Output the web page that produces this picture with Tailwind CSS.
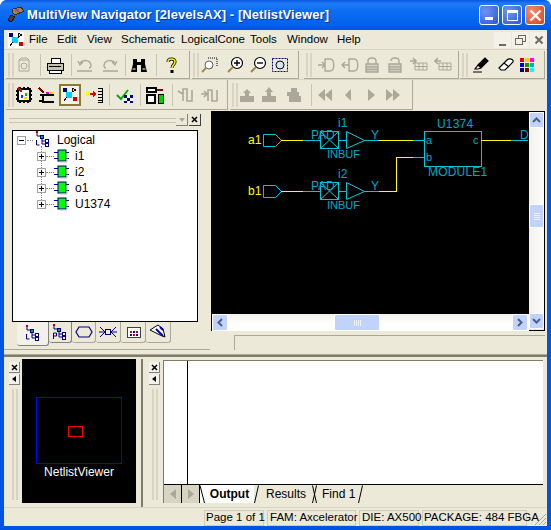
<!DOCTYPE html>
<html lang="en">
<head>
  <meta charset="UTF-8">
  <title>MultiView Navigator</title>
  <script src="https://cdn.jsdelivr.net/npm/@tailwindcss/browser@4"></script>
</head>
<body class="bg-white overflow-hidden font-['Liberation_Sans',sans-serif] text-[11.5px] text-black">

<!-- shared icons -->
<svg class="hidden">
  <symbol id="chip" viewBox="0 0 16 14">
    <rect x="4" y="1" width="8" height="11" fill="#00ff00" stroke="#000080"/>
    <path d="M0 3.5h4M0 9.5h4M12 3.5h3M12 9.5h3" stroke="#000080"/>
    <path d="M13 4v9H6" stroke="#c0c0c0" fill="none"/>
  </symbol>
  <symbol id="plus" viewBox="0 0 9 9">
    <rect x="0.5" y="0.5" width="8" height="8" fill="#fff" stroke="#a0a0a0"/>
    <path d="M2 4.5h5M4.5 2v5" stroke="#000"/>
  </symbol>
  <symbol id="tree" viewBox="0 0 16 16">
    <rect x="1" y="0" width="2" height="2" fill="#c00000"/>
    <path d="M2 2v3h4M7 7v3h3M7 10v3h3" stroke="#000080" fill="none"/>
    <rect x="5.5" y="4.5" width="3" height="3" fill="#00a060" stroke="#000080"/>
    <rect x="10.5" y="8.5" width="3" height="3" fill="#fff" stroke="#000080"/>
    <rect x="10.5" y="12.5" width="3" height="3" fill="#fff" stroke="#000080"/>
    <path d="M1.5 9v5h3" stroke="#000080" fill="none"/>
  </symbol>
  <symbol id="treep" viewBox="0 0 16 16">
    <rect x="1" y="0" width="2" height="2" fill="#c00000"/>
    <path d="M2 2v3h4M7 7v3h3M7 10v3h3" stroke="#000080" fill="none"/>
    <rect x="5.5" y="4.5" width="3" height="3" fill="#00a060" stroke="#000080"/>
    <rect x="10.5" y="8.5" width="3" height="3" fill="#fff" stroke="#000080"/>
    <rect x="10.5" y="12.5" width="3" height="3" fill="#fff" stroke="#000080"/>
    <path d="M1.5 15V9h3v3h-3" stroke="#000080" fill="none"/>
  </symbol>
</svg>

<div class="w-[551px] h-[530px] flex flex-col rounded-t-[7px] overflow-hidden bg-[#0054e3]">

  <!-- title bar -->
  <div class="h-[30px] shrink-0 flex items-center pl-[7px] pr-[6px] bg-[linear-gradient(180deg,#0a55e0_0%,#1f7bf5_12%,#0f6df5_35%,#0468f0_60%,#0260ea_85%,#0054e3_100%)]">
    <svg class="w-[18px] h-[18px] shrink-0" viewBox="0 0 18 18" shape-rendering="crispEdges">
      <path d="M6 3l8-2 3 4-9 4-3-3z" fill="#a08850" stroke="#3a2a20"/>
      <path d="M4 9l4 2-4 5-3-2z" fill="#504030" stroke="#201810"/>
      <rect x="8" y="3" width="4" height="3" fill="#9a50a0"/>
    </svg>
    <span class="ml-[2px] w-[312px] shrink-0 whitespace-nowrap text-white font-bold text-[13px] tracking-[0.07px] [text-shadow:1px_1px_0_#0a2f9a]">MultiView Navigator [2levelsAX] - [NetlistViewer]</span>
    <div class="ml-auto flex gap-[3px]">
      <div class="w-[20px] h-[20px] rounded-[3px] border border-white bg-[radial-gradient(circle_at_30%_30%,#6f95ee,#2a55d8)] flex items-end pl-[5px] pb-[4px]"><div class="w-[8px] h-[3px] bg-white"></div></div>
      <div class="w-[20px] h-[20px] rounded-[3px] border border-white bg-[radial-gradient(circle_at_30%_30%,#6f95ee,#2a55d8)] flex items-center justify-center"><div class="w-[11px] h-[11px] border border-white border-t-[3px]"></div></div>
      <div class="w-[20px] h-[20px] rounded-[3px] border border-white bg-[radial-gradient(circle_at_30%_30%,#ee9070,#d0441c)] flex items-center justify-center">
        <svg class="w-[13px] h-[13px]" viewBox="0 0 13 13"><path d="M1.5 1.5l10 10M11.5 1.5l-10 10" stroke="#fff" stroke-width="2.4"/></svg>
      </div>
    </div>
  </div>

  <div class="flex-1 flex flex-col mx-[4px] bg-[#ece9d8] min-h-0">

    <!-- menu bar -->
    <div class="h-[20px] shrink-0 flex items-center relative border-b border-[#d8d4c4]">
      <svg class="w-[16px] h-[16px] ml-[4px] shrink-0" viewBox="0 0 16 16" shape-rendering="crispEdges">
        <rect width="16" height="16" fill="#fff"/>
        <rect x="1" y="1" width="4" height="4" fill="#000080"/>
        <path d="M10 1l4 2-4 2z" fill="#ffff00" stroke="#000"/>
        <rect x="4" y="5" width="6" height="6" fill="#00d0ff"/>
        <path d="M2 14l3-4M10 6l2-2" stroke="#000"/>
        <rect x="11" y="10" width="4" height="4" fill="#d00000"/>
      </svg>
      <div class="ml-[5px] flex">
        <span class="w-[28px]">File</span><span class="w-[30px]">Edit</span><span class="w-[34px]">View</span><span class="w-[60px]">Schematic</span><span class="w-[69px]">LogicalCone</span><span class="w-[37px]">Tools</span><span class="w-[50px]">Window</span><span>Help</span>
      </div>
      <div class="ml-auto mr-[0px] flex gap-[1px]">
        <div class="w-[17px] h-[16px] bg-[#f4f2e8] flex items-end justify-center pb-[2px]"><div class="w-[7px] h-[2px] bg-[#6b6b60]"></div></div>
        <div class="w-[17px] h-[16px] bg-[#f4f2e8] flex items-center justify-center">
          <svg class="w-[11px] h-[10px]" viewBox="0 0 11 10" shape-rendering="crispEdges"><path d="M3.5 2.5v-2h7v6h-3M0.5 3.5h7v6h-7z" fill="none" stroke="#6b6b60"/></svg>
        </div>
        <div class="w-[17px] h-[16px] bg-[#f4f2e8] flex items-center justify-center">
          <svg class="w-[10px] h-[10px]" viewBox="0 0 10 10"><path d="M1.5 1.5l7 7M8.5 1.5l-7 7" stroke="#6b6b60" stroke-width="2"/></svg>
        </div>
      </div>
    </div>

    <!-- toolbar 1 -->
    <div class="h-[30px] shrink-0 flex pl-[2px] border-b border-[#d8d4c4] pt-[1px]">
      <div class="w-[184px] flex items-center border-r border-b border-[#aca899]">
        <div class="ml-[2px] w-[6px] h-[24px] border-x-2 border-[#d8d4c4]"></div>
        <svg class="ml-[1px] w-[18px] h-[18px]" viewBox="0 0 18 18" fill="none" stroke="#aca899"><path d="M4 4h10v11H4zM4 4l2-2h6l2 2"/><circle cx="9" cy="10" r="3"/></svg>
        <div class="ml-[7px] w-px h-[22px] bg-[#c8c4b4]"></div>
        <svg class="ml-[5px] w-[18px] h-[18px]" viewBox="0 0 18 18" shape-rendering="crispEdges"><path d="M5 2h9v5H5z" fill="#fff" stroke="#000"/><path d="M1 7h16v7H1z" fill="#c8c4b4" stroke="#000"/><path d="M3 14h12v3H3z" fill="#fff" stroke="#000"/><path d="M3 10h12" stroke="#000"/></svg>
        <div class="ml-[7px] w-px h-[22px] bg-[#c8c4b4]"></div>
        <svg class="ml-[4px] w-[18px] h-[18px]" viewBox="0 0 18 18" fill="none" stroke="#aca899" stroke-width="1.3"><path d="M2 5l2 4 3-3M4 7c3-4 10-3 11 2 0 2-1 3-2 3M1 15h15"/></svg>
        <svg class="ml-[7px] w-[18px] h-[18px]" viewBox="0 0 18 18" fill="none" stroke="#aca899" stroke-width="1.3"><path d="M16 5l-2 4-3-3M14 7C11 3 4 4 3 9c0 2 1 3 2 3M2 15h15"/></svg>
        <div class="ml-[6px] w-px h-[22px] bg-[#c8c4b4]"></div>
        <svg class="ml-[4px] w-[18px] h-[18px]" viewBox="0 0 18 18"><path d="M3 3h4v3h4V3h4v5l2 8h-6V9H7v7H1l2-8z" fill="#000"/><path d="M2.5 13h3M12.5 13h3" stroke="#fff"/></svg>
        <div class="ml-[8px] w-px h-[22px] bg-[#c8c4b4]"></div>
        <svg class="ml-[5px] w-[18px] h-[18px]" viewBox="0 0 18 18"><path d="M6 6c0-4 7-4 7 0 0 2.500-3 2.500-3 6" fill="none" stroke="#000" stroke-width="3"/><path d="M6 6c0-4 7-4 7 0 0 2.500-3 2.500-3 6" fill="none" stroke="#ffff00" stroke-width="1.500"/><rect x="8.500" y="14" width="3" height="3" fill="#000"/></svg>
      </div>
      <div class="ml-[2px] w-[107px] flex items-center border-r border-b border-[#aca899]">
        <div class="ml-[1px] w-[6px] h-[24px] border-x-2 border-[#d8d4c4]"></div>
        <svg class="ml-[2px] w-[18px] h-[18px]" viewBox="0 0 18 18" fill="none"><path d="M7 2h9v9" stroke="#000" stroke-dasharray="1 1"/><circle cx="8" cy="9" r="4" fill="#fff" stroke="#606060"/><path d="M5 12l-4 4" stroke="#a08850" stroke-width="2"/></svg>
        <svg class="ml-[7px] w-[18px] h-[18px]" viewBox="0 0 18 18" fill="none"><circle cx="11" cy="7" r="5.500" fill="#fff" stroke="#000" stroke-width="1.200"/><path d="M8 7h6M11 4v6" stroke="#000" stroke-width="1.400"/><path d="M7 11l-5 5" stroke="#a08850" stroke-width="2"/></svg>
        <svg class="ml-[5px] w-[18px] h-[18px]" viewBox="0 0 18 18" fill="none"><circle cx="11" cy="7" r="5.500" fill="#fff" stroke="#000" stroke-width="1.200"/><path d="M8 7h6" stroke="#000" stroke-width="1.400"/><path d="M7 11l-5 5" stroke="#a08850" stroke-width="2"/></svg>
        <svg class="ml-[4px] w-[18px] h-[18px]" viewBox="0 0 18 18" fill="none"><rect x="1.500" y="2.500" width="15" height="13" stroke="#000080" stroke-dasharray="2 1"/><circle cx="9" cy="9" r="4" fill="#d0e8ff" stroke="#000"/></svg>
      </div>
      <div class="ml-[5px] w-[155px] flex items-center border-r border-b border-[#aca899]">
        <div class="ml-[2px] w-[6px] h-[24px] border-x-2 border-[#d8d4c4]"></div>
        <svg class="ml-[5px] w-[18px] h-[18px]" viewBox="0 0 18 18" fill="none" stroke="#aca899" stroke-width="1.400"><path d="M1 9h7M5 6l3 3-3 3M8 3h5c5 0 5 12 0 12H8z"/></svg>
        <svg class="ml-[6px] w-[18px] h-[18px]" viewBox="0 0 18 18" fill="none" stroke="#aca899" stroke-width="1.400"><path d="M8 9H1M4 6L1 9l3 3M8 3h5c5 0 5 12 0 12H8z"/></svg>
        <svg class="ml-[4px] w-[18px] h-[18px]" viewBox="0 0 18 18" fill="none" stroke="#aca899" stroke-width="1.400"><path d="M5 8V5c0-4 8-4 8 0v3"/><path d="M3 8h12v8H3z" fill="#d8d4c4"/><path d="M3 11h12M3 13.500h12"/></svg>
        <svg class="ml-[5px] w-[18px] h-[18px]" viewBox="0 0 18 18" fill="none" stroke="#aca899" stroke-width="1.400"><path d="M5 5c0-4 8-4 8 0v3"/><path d="M3 8h12v8H3z" fill="#d8d4c4"/><path d="M3 11h12M3 13.500h12"/></svg>
        <svg class="ml-[6px] w-[18px] h-[18px]" viewBox="0 0 18 18" fill="none" stroke="#aca899"><path d="M0 5h6M3 2l3 3-3 3" stroke-width="1.600"/><path d="M5 7h12v7H5zM5 10.500h12M9 7v7M13 7v7"/></svg>
        <svg class="ml-[6px] w-[18px] h-[18px]" viewBox="0 0 18 18" fill="none" stroke="#aca899"><path d="M7 5H1M4 2L1 5l3 3" stroke-width="1.600"/><path d="M5 7h12v7H5zM5 10.500h12M9 7v7M13 7v7"/></svg>
      </div>
      <div class="ml-[1px] w-[85px] flex items-center border-r border-b border-[#aca899]">
        <div class="ml-[2px] w-[6px] h-[24px] border-x-2 border-[#d8d4c4]"></div>
        <svg class="ml-[4px] w-[18px] h-[18px]" viewBox="0 0 18 18" fill="none" stroke="#000" stroke-width="1.200"><path d="M6 9l7-7 3 3-7 7z" fill="#000"/><path d="M6 9l-3 4 3 0 3-1M1 16h9"/></svg>
        <svg class="ml-[8px] w-[18px] h-[18px]" viewBox="0 0 18 18" fill="none" stroke="#000" stroke-width="1.200"><path d="M1 12l8-8c2-2 7-1 6 2l-8 8H3z" fill="#fff"/><path d="M6 7l5 4"/></svg>
        <svg class="ml-[2px] w-[18px] h-[18px]" viewBox="0 0 18 18" shape-rendering="crispEdges">
          <rect x="2" y="2" width="4" height="4" fill="#e00000"/><rect x="7" y="2" width="4" height="4" fill="#ffd000"/><rect x="12" y="2" width="4" height="4" fill="#ff00ff"/>
          <rect x="2" y="7" width="4" height="4" fill="#0000d0"/><rect x="7" y="7" width="4" height="4" fill="#00a000"/><rect x="12" y="7" width="4" height="4" fill="#00b0b0"/>
          <rect x="2" y="12" width="4" height="4" fill="#000080"/><rect x="7" y="12" width="4" height="4" fill="#800000"/><rect x="12" y="12" width="4" height="4" fill="#00ffff"/>
        </svg>
      </div>
    </div>

    <!-- toolbar 2 -->
    <div class="h-[31px] shrink-0 flex pl-[2px] pb-[1px]">
      <div class="w-[222px] flex items-center border-r border-b border-[#aca899]">
        <div class="ml-[2px] w-[6px] h-[24px] border-x-2 border-[#d8d4c4]"></div>
        <svg class="ml-[1px] w-[18px] h-[18px]" viewBox="0 0 18 18" shape-rendering="crispEdges"><path d="M3 3h12v12H3z" fill="#fff" stroke="#000" stroke-width="2"/><path d="M1 5h3M1 9h3M1 13h3M14 5h3M14 9h3M14 13h3M5 1v3M9 1v3M13 1v3M5 14v3M9 14v3M13 14v3" stroke="#000" stroke-width="1.500"/><rect x="6" y="9" width="2" height="3" fill="#0040ff"/><rect x="10" y="7" width="2" height="3" fill="#00c000"/><rect x="9" y="11" width="3" height="2" fill="#ffd000"/><path d="M3 2l4 4" stroke="#e00000" stroke-width="2"/></svg>
        <svg class="ml-[5px] w-[18px] h-[18px]" viewBox="0 0 18 18" shape-rendering="crispEdges"><path d="M1 2l5 5" stroke="#800000" stroke-width="2"/><rect x="8" y="6" width="3" height="3" fill="#e000e0"/><rect x="12" y="6" width="3" height="3" fill="#ffd000"/><path d="M2 9h14M5 9v7h11" stroke="#000" stroke-width="1.500" fill="none"/><rect x="1" y="14" width="4" height="2" fill="#000"/></svg>
        <div class="ml-[5px] w-[18px] h-[18px] outline-2 outline-[#8a7a30] bg-[#f4f2e8] flex items-center justify-center">
          <svg class="w-[16px] h-[16px]" viewBox="0 0 16 16" shape-rendering="crispEdges"><rect x="1" y="1" width="4" height="4" fill="#000080"/><path d="M10 1l4 2-4 2z" fill="#ffff00" stroke="#000"/><rect x="4" y="5" width="6" height="6" fill="#00d0ff"/><path d="M2 14l3-4" stroke="#000"/><rect x="11" y="10" width="4" height="4" fill="#d00000"/></svg>
        </div>
        <svg class="ml-[7px] w-[18px] h-[18px]" viewBox="0 0 18 18" shape-rendering="crispEdges"><rect x="0" y="6" width="4" height="4" fill="#ffff00"/><path d="M4 8h6" stroke="#e00000" stroke-width="2"/><path d="M7 5l4 3-4 3z" fill="#e00000"/><path d="M12 2h4v14h-4M12 5h5M12 8h5M12 11h5M12 14h5" stroke="#000" fill="none"/></svg>
        <div class="ml-[5px] w-px h-[22px] bg-[#c8c4b4]"></div>
        <svg class="ml-[6px] w-[18px] h-[18px]" viewBox="0 0 18 18"><path d="M1 9l4 4 7-9" stroke="#00b000" stroke-width="2" fill="none"/><path d="M8 9h9v8H8z" fill="#fff"/><path d="M8 9h3v3H8zM14 9h3v3h-3zM11 12h3v3h-3zM8 15h3v2H8zM14 15h3v2h-3z" fill="#000080"/></svg>
        <div class="ml-[6px] w-px h-[22px] bg-[#c8c4b4]"></div>
        <svg class="ml-[5px] w-[18px] h-[18px]" viewBox="0 0 18 18" shape-rendering="crispEdges"><path d="M1 2h9v4H1z" fill="#fff" stroke="#000" stroke-width="1.500"/><path d="M17 4h-6" stroke="#800000" stroke-width="1.500"/><path d="M1 9h8v8H1z" fill="#fff" stroke="#000" stroke-width="1.500"/><rect x="12" y="8" width="5" height="9" fill="#00d000" stroke="#000"/></svg>
        <div class="ml-[8px] w-px h-[22px] bg-[#c8c4b4]"></div>
        <svg class="ml-[4px] w-[18px] h-[18px]" viewBox="0 0 18 18" fill="none" stroke="#aca899" stroke-width="1.600"><path d="M1 5l5 3M6 15V3h4v12h5V4"/></svg>
        <svg class="ml-[6px] w-[18px] h-[18px]" viewBox="0 0 18 18" fill="none" stroke="#aca899" stroke-width="1.600"><path d="M0 8h5M3 5l3 3-3 3M7 15V4h4v11h5V4"/></svg>
      </div>
      <div class="ml-[2px] w-[183px] flex items-center border-r border-b border-[#aca899]">
        <div class="ml-[2px] w-[6px] h-[24px] border-x-2 border-[#d8d4c4]"></div>
        <svg class="ml-[0px] w-[18px] h-[18px]" viewBox="0 0 18 18" fill="#aca899"><path d="M9 3l4 4h-2v3h-4V7H5zM2 10h14v6H2z"/></svg>
        <svg class="ml-[4px] w-[18px] h-[18px]" viewBox="0 0 18 18" fill="#aca899"><path d="M9 1l4 5h-2v4h-4V6H5zM2 10h14v6H2z"/></svg>
        <svg class="ml-[7px] w-[18px] h-[18px]" viewBox="0 0 18 18" fill="#aca899"><path d="M6 2h6v4h2v4h2v6H4v-6H2V6h4z"/></svg>
        <div class="ml-[8px] w-px h-[22px] bg-[#c8c4b4]"></div>
        <svg class="ml-[4px] w-[18px] h-[18px]" viewBox="0 0 18 18" fill="#aca899"><path d="M9 3v12L2 9zM16 3v12L9 9z"/></svg>
        <svg class="ml-[5px] w-[18px] h-[18px]" viewBox="0 0 18 18" fill="#aca899"><path d="M12 3v12L6 9z"/></svg>
        <svg class="ml-[5px] w-[18px] h-[18px]" viewBox="0 0 18 18" fill="#aca899"><path d="M6 3v12l7-6z"/></svg>
        <svg class="ml-[4px] w-[18px] h-[18px]" viewBox="0 0 18 18" fill="#aca899"><path d="M2 3v12l7-6zM9 3v12l7-6z"/></svg>
      </div>
    </div>

    <!-- upper area -->
    <div class="h-[239px] shrink-0 flex">
      <!-- left docking pane -->
      <div class="w-[206px] shrink-0 flex flex-col border-b border-[#aca899]">
        <div class="h-[18px] shrink-0 flex items-center pl-[5px] pr-[9px]">
          <div class="flex-1 h-[5px] border-y border-[#c8c4b4]"></div>
          <div class="w-[12px] h-[12px] bg-[#ece9d8] border-r border-b border-[#808080] flex items-center justify-center">
            <div class="w-0 h-0 border-x-[3px] border-x-transparent border-t-[4px] border-t-[#aca899]"></div>
          </div>
          <div class="ml-px w-[12px] h-[12px] border-r border-b border-[#404040] flex items-center justify-center">
            <svg class="w-[7px] h-[7px]" viewBox="0 0 7 7"><path d="M1 1l5 5M6 1L1 6" stroke="#000" stroke-width="1.600"/></svg>
          </div>
        </div>
        <!-- tree -->
        <div class="relative ml-[8px] w-[186px] h-[192px] mt-px shrink-0 bg-white border border-black pt-px text-[12px]">
          <div class="absolute left-[28px] top-[15px] h-[60px] border-l border-dotted border-[#808080]"></div>
          <div class="h-[16px] flex items-center pl-[4px]">
            <svg class="w-[9px] h-[9px]" viewBox="0 0 9 9"><rect x="0.5" y="0.5" width="8" height="8" fill="#fff" stroke="#a0a0a0"/><path d="M2 4.500h5" stroke="#000"/></svg>
            <div class="w-[6px] border-t border-dotted border-[#808080] ml-px"></div>
            <svg class="w-[16px] h-[16px] -mt-[3px] ml-[2px]"><use href="#tree"/></svg>
            <span class="ml-[6px] leading-none">Logical</span>
          </div>
          <div class="h-[16px] flex items-center pl-[24px]">
            <svg class="w-[9px] h-[9px] relative"><use href="#plus"/></svg>
            <div class="w-[8px] border-t border-dotted border-[#808080]"></div>
            <svg class="w-[16px] h-[14px]"><use href="#chip"/></svg>
            <span class="ml-[5px] leading-none">i1</span>
          </div>
          <div class="h-[16px] flex items-center pl-[24px]">
            <svg class="w-[9px] h-[9px] relative"><use href="#plus"/></svg>
            <div class="w-[8px] border-t border-dotted border-[#808080]"></div>
            <svg class="w-[16px] h-[14px]"><use href="#chip"/></svg>
            <span class="ml-[5px] leading-none">i2</span>
          </div>
          <div class="h-[16px] flex items-center pl-[24px]">
            <svg class="w-[9px] h-[9px] relative"><use href="#plus"/></svg>
            <div class="w-[8px] border-t border-dotted border-[#808080]"></div>
            <svg class="w-[16px] h-[14px]"><use href="#chip"/></svg>
            <span class="ml-[5px] leading-none">o1</span>
          </div>
          <div class="h-[16px] flex items-center pl-[24px]">
            <svg class="w-[9px] h-[9px] relative"><use href="#plus"/></svg>
            <div class="w-[8px] border-t border-dotted border-[#808080]"></div>
            <svg class="w-[16px] h-[14px]"><use href="#chip"/></svg>
            <span class="ml-[5px] leading-none">U1374</span>
          </div>
        </div>
        <!-- tree tabs -->
        <div class="flex ml-[13px] items-start">
          <div class="w-[32px] h-[25px] -mt-px bg-[#f4f2e8] border-r border-b border-[#808080] rounded-b-[3px] flex items-center justify-center"><svg class="w-[16px] h-[16px]"><use href="#tree"/></svg></div>
          <div class="w-[23px] h-[21px] border-r border-b border-[#808080] rounded-b-[3px] flex items-center justify-center"><svg class="w-[16px] h-[16px]"><use href="#treep"/></svg></div>
          <div class="w-[24px] h-[21px] border-r border-b border-[#aca899] rounded-b-[3px] flex items-center justify-center">
            <svg class="w-[18px] h-[12px]" viewBox="0 0 18 12"><path d="M4 1h10l3 5-3 5H4L1 6z" fill="none" stroke="#000080" stroke-width="1.200"/></svg>
          </div>
          <div class="w-[25px] h-[21px] border-r border-b border-[#aca899] rounded-b-[3px] flex items-center justify-center">
            <svg class="w-[18px] h-[12px]" viewBox="0 0 18 12"><rect x="6.500" y="3.500" width="5" height="5" fill="none" stroke="#000080"/><path d="M0 6h6M12 6h6M1 1l5 5-5 5M17 1l-5 5 5 5" fill="none" stroke="#000080"/></svg>
          </div>
          <div class="w-[25px] h-[21px] border-r border-b border-[#aca899] rounded-b-[3px] flex items-center justify-center">
            <svg class="w-[15px] h-[12px]" viewBox="0 0 15 12" shape-rendering="crispEdges"><rect x="1.500" y="1.500" width="13" height="10" fill="#fff" stroke="#404040"/><rect x="4" y="5" width="2" height="2" fill="#d00000"/><rect x="7" y="5" width="2" height="2" fill="#0000d0"/><rect x="10" y="5" width="2" height="2" fill="#d00000"/><rect x="4" y="8" width="2" height="2" fill="#0000d0"/><rect x="7" y="8" width="2" height="2" fill="#d00000"/><rect x="10" y="8" width="2" height="2" fill="#0000d0"/></svg>
          </div>
          <div class="w-[25px] h-[21px] border-r border-b border-[#aca899] rounded-b-[3px] flex items-center justify-center">
            <svg class="w-[18px] h-[16px]" viewBox="0 0 18 16" fill="none"><path d="M1 6l8-5 5 4 2 8-5-2z" fill="#fff" stroke="#000"/><path d="M7 5l7 7" stroke="#0000c0" stroke-width="2"/><path d="M11 3l3 3" stroke="#0000c0" stroke-width="2"/></svg>
          </div>
        </div>
      </div>

      <!-- schematic pane -->
      <div class="flex-1 flex flex-col pl-[1px] pr-[2px]">
        <div class="h-[220px] w-[334px] shrink-0 border border-black flex flex-col bg-[#ece9d8]">
          <div class="flex h-[202px] shrink-0">
            <svg class="w-[317px] h-[202px] shrink-0 bg-black" viewBox="212 112 317 202" font-family="'Liberation Sans',sans-serif" font-size="12">
              <g fill="none" stroke="#00c8d8" shape-rendering="crispEdges">
                <path d="M303 140.500h17M338 140.500h9M364 140.500h15M413 140.500h11M511 140.500h17M303 191.500h17M338 191.500h9M364 191.500h15M413 157.500h11"/>
                <rect x="320.500" y="131.500" width="18" height="17"/>
                <rect x="320.500" y="182.500" width="18" height="17"/>
                <rect x="424.500" y="131.500" width="57" height="35"/>
              </g>
              <g fill="none" stroke="#00c8d8">
                <path d="M263.500 134.500h12l6 6-6 6h-12z M263.500 185.500h12l6 6-6 6h-12z"/>
                <path d="M320.500 131.500l18 17M338.500 131.500l-18 17M320.500 182.500l18 17M338.500 182.500l-18 17"/>
                <path d="M346.500 131.500l18 9-18 8zM346.500 182.500l18 9-18 8z"/>
              </g>
              <path d="M281 140.500h22M379 140.500h34M481 140.500h30M281 191.500h22M379 191.500h17.500V157.500H413" fill="none" stroke="#ffff00" shape-rendering="crispEdges"/>
              <g fill="#00a8c8">
                <text x="311" y="139">PAD</text>
                <text x="311" y="190">PAD</text>
                <text x="371" y="139">Y</text>
                <text x="371" y="190">Y</text>
                <text x="426" y="144" font-size="11">a</text>
                <text x="426" y="161" font-size="11">b</text>
                <text x="473" y="144" font-size="11">c</text>
                <text x="520" y="139">D</text>
                <text x="437" y="128" letter-spacing="0.2">U1374</text>
                <text x="428" y="176" letter-spacing="0.2">MODULE1</text>
                <text x="338" y="127">i1</text>
                <text x="338" y="178">i2</text>
                <text x="327" y="158" font-size="11">INBUF</text>
                <text x="327" y="209" font-size="11">INBUF</text>
              </g>
              <text x="248" y="144" fill="#ffff00">a1</text>
              <text x="248" y="195" fill="#ffff00">b1</text>
            </svg>
            <!-- vertical scrollbar -->
            <div class="relative flex-1 bg-[linear-gradient(90deg,#f3f1ec,#fdfdfb)]">
              <div class="absolute inset-x-0 top-0 h-[16px] bg-[#c1d3fb] border border-white rounded-[2px] flex items-center justify-center">
                <svg class="w-[9px] h-[6px]" viewBox="0 0 9 6"><path d="M1 5l3.500-3.500L8 5" fill="none" stroke="#4d6185" stroke-width="2"/></svg>
              </div>
              <div class="absolute inset-x-0 top-[92px] h-[24px] bg-[#c1d3fb] border border-white rounded-[2px] flex flex-col items-center justify-center gap-px">
                <div class="w-[6px] h-px bg-[#eef4fe]"></div><div class="w-[6px] h-px bg-[#eef4fe]"></div><div class="w-[6px] h-px bg-[#eef4fe]"></div><div class="w-[6px] h-px bg-[#eef4fe]"></div>
              </div>
            </div>
          </div>
          <!-- horizontal scrollbar -->
          <div class="h-[17px] shrink-0 flex">
            <div class="relative w-[317px] shrink-0 bg-[linear-gradient(180deg,#f3f1ec,#fdfdfb_50%,#ffffff)]">
              <div class="absolute left-0 inset-y-0 w-[16px] bg-[#c1d3fb] border border-white rounded-[2px] flex items-center justify-center">
                <svg class="w-[6px] h-[9px]" viewBox="0 0 6 9"><path d="M5 1L1.500 4.500 5 8" fill="none" stroke="#4d6185" stroke-width="2"/></svg>
              </div>
              <div class="absolute left-[122px] inset-y-0 w-[46px] bg-[#c1d3fb] border border-white rounded-[2px] flex items-center justify-center gap-px">
                <div class="w-px h-[6px] bg-[#eef4fe]"></div><div class="w-px h-[6px] bg-[#eef4fe]"></div><div class="w-px h-[6px] bg-[#eef4fe]"></div><div class="w-px h-[6px] bg-[#eef4fe]"></div>
              </div>
              <div class="absolute right-[1px] inset-y-0 w-[16px] bg-[#c1d3fb] border border-white rounded-[2px] flex items-center justify-center">
                <svg class="w-[6px] h-[9px]" viewBox="0 0 6 9"><path d="M1 1l3.500 3.500L1 8" fill="none" stroke="#4d6185" stroke-width="2"/></svg>
              </div>
            </div>
            <div class="relative flex-1">
              <div class="absolute inset-x-0 -top-[1px] h-[16px] bg-[#c1d3fb] border border-white rounded-[2px] flex items-center justify-center">
                <svg class="w-[9px] h-[6px]" viewBox="0 0 9 6"><path d="M1 1l3.500 3.500L8 1" fill="none" stroke="#4d6185" stroke-width="2"/></svg>
              </div>
            </div>
          </div>
        </div>
        <div class="ml-[23px] mt-[4px] h-[15px] border-t border-l border-[#aca899] border-b-white"></div>
      </div>
    </div>

    <!-- horizontal splitter -->
    <div class="h-[9px] shrink-0 flex flex-col pt-[4px]">
      <div class="h-px bg-[#aca899]"></div><div class="h-[2px] bg-[#807c6c]"></div>
    </div>

    <!-- lower area -->
    <div class="flex-1 flex min-h-0">
      <!-- overview -->
      <div class="w-[139px] shrink-0 flex border-r-2 border-r-[#807c6c] pb-[4px]">
        <div class="w-[18px] shrink-0 flex flex-col items-center pt-[3px] pl-[3px]">
          <div class="w-[11px] h-[11px] flex items-center justify-center bg-[#f4f2e8] border-r border-b border-[#808080]"><svg class="w-[7px] h-[7px]" viewBox="0 0 7 7"><path d="M1 1l5 5M6 1L1 6" stroke="#000" stroke-width="1.600"/></svg></div>
          <div class="w-[11px] h-[11px] flex items-center justify-center bg-[#f4f2e8] border-r border-b border-[#808080] mt-[1px]"><div class="w-0 h-0 border-y-[3px] border-y-transparent border-r-[4px] border-r-black"></div></div>
          <div class="flex-1 w-[6px] mt-[4px] mb-[3px] border-x-2 border-[#d8d4c4]"></div>
        </div>
        <div class="w-[114px] h-[144px] shrink-0 bg-black relative">
          <div class="absolute left-[14px] top-[38px] w-[86px] h-[67px] border border-[#0000ff]"></div>
          <div class="absolute left-[46px] top-[67px] w-[15px] h-[11px] border border-[#ff0000]"></div>
          <div class="absolute inset-x-0 top-[106px] text-center text-white text-[12px] leading-[14px]">NetlistViewer</div>
        </div>
      </div>
      <!-- output -->
      <div class="flex-1 flex pb-[4px] pr-[4px]">
        <div class="w-[20px] shrink-0 flex flex-col items-center pt-[3px] pl-[3px]">
          <div class="w-[11px] h-[11px] flex items-center justify-center bg-[#f4f2e8] border-r border-b border-[#808080]"><svg class="w-[7px] h-[7px]" viewBox="0 0 7 7"><path d="M1 1l5 5M6 1L1 6" stroke="#000" stroke-width="1.600"/></svg></div>
          <div class="w-[11px] h-[11px] flex items-center justify-center bg-[#f4f2e8] border-r border-b border-[#808080] mt-[1px]"><div class="w-0 h-0 border-y-[3px] border-y-transparent border-r-[4px] border-r-black"></div></div>
          <div class="flex-1 w-[6px] mt-[4px] mb-[3px] border-x-2 border-[#d8d4c4]"></div>
        </div>
        <div class="flex-1 flex flex-col bg-white border-t border-l border-[#807c6c] mt-px">
          <div class="flex-1 ml-[23px] border-l border-black"></div>
          <div class="h-[19px] shrink-0 flex bg-[#ece9d8] border-t border-black items-stretch">
            <div class="w-[18px] flex items-center justify-center bg-[#d8d4c4] border-r border-black"><div class="w-0 h-0 border-y-[5px] border-y-transparent border-r-[6px] border-r-[#aca899]"></div></div>
            <div class="w-[18px] flex items-center justify-center bg-[#d8d4c4] border-r border-black"><div class="w-0 h-0 border-y-[5px] border-y-transparent border-l-[6px] border-l-[#aca899]"></div></div>
            <svg class="w-[5px] bg-white" viewBox="0 0 5 18"><path d="M0 0.500L4.500 18" stroke="#000" fill="none"/></svg>
            <div class="w-[49px] flex items-center justify-center bg-white font-bold text-[12px]">Output</div>
            <svg class="w-[5px]" viewBox="0 0 5 18"><path d="M0.500 18L4.500 0.500" stroke="#000" fill="none"/></svg>
            <div class="w-[53px] flex items-center pl-[7px] text-[12px]">Results</div>
            <svg class="w-[5px]" viewBox="0 0 5 18"><path d="M4.500 18L0.500 0.500M0.500 18L4.500 0.500" stroke="#000" fill="none"/></svg>
            <div class="w-[41px] flex items-center pl-[5px] text-[12px]">Find 1</div>
            <svg class="w-[5px]" viewBox="0 0 5 18"><path d="M0.500 18L4.500 0.500" stroke="#000" fill="none"/></svg>
          </div>
        </div>
      </div>
    </div>

    <!-- status bar -->
    <div class="h-[19px] shrink-0 flex items-end border-t border-[#d8d4c4] pl-[200px] gap-[3px] relative">
      <div class="w-[60px] h-[16px] flex items-center pl-[1px] border border-[#d0ccbc] whitespace-nowrap">Page 1 of 1</div>
      <div class="w-[89px] h-[16px] flex items-center pl-[2px] border border-[#d0ccbc] whitespace-nowrap">FAM: Axcelerator</div>
      <div class="w-[60px] h-[16px] flex items-center pl-[2px] border border-[#d0ccbc] whitespace-nowrap">DIE: AX500</div>
      <div class="w-[105px] h-[16px] flex items-center pl-[1px] border border-[#d0ccbc] whitespace-nowrap">PACKAGE: 484 FBGA</div>
      <svg class="absolute right-0 bottom-0 w-[14px] h-[14px]" viewBox="0 0 14 14"><path d="M13 2L2 13M13 6L6 13M13 10l-3 3" stroke="#aca899"/></svg>
    </div>
  </div>
  <div class="h-[4px] shrink-0"></div>
</div>
</body>
</html>
